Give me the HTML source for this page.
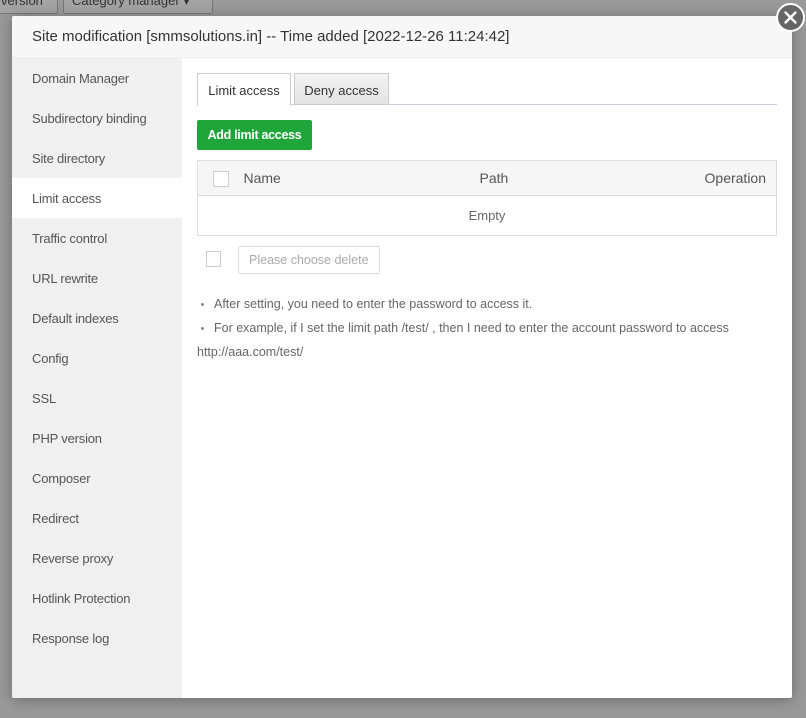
<!DOCTYPE html>
<html><head><style>
*{margin:0;padding:0;box-sizing:border-box}
body{width:806px;height:718px;background:#999;position:relative;overflow:hidden;font-family:"Liberation Sans",sans-serif;font-size:13px;color:#333;white-space:nowrap}
.bgbtn{position:absolute;top:-10px;height:24px;border:1px solid #777;border-radius:3px;background:#a3a3a3;color:#333;font-size:13px;padding:0 8px;line-height:20px}
.modal{position:absolute;left:12px;top:16px;width:780px;height:682px;background:#fff;box-shadow:0 2px 14px rgba(0,0,0,.3);border-radius:2px;overflow:hidden}
.hd{height:42px;background:#f7f7f7;border-bottom:1px solid #eee;padding-left:20px;line-height:42px;font-size:15px;color:#333}
.side{position:absolute;left:0;top:42px;width:170px;bottom:0;background:#f0f0f0}
.side div{height:40px;line-height:42px;padding-left:20px;color:#555;letter-spacing:-0.2px}
.side .on{background:#fff}
.main{position:absolute;left:185px;top:42px;right:15px}
.tabs{margin-top:15px;height:32px;border-bottom:1px solid #d0cde0;position:relative}
.tab{position:absolute;top:0;height:32px;line-height:33px;text-align:center;border:1px solid #ccc;}
.t1{left:0;width:94px;background:#fff;border-bottom:1px solid #fff;height:33px}
.t2{left:97px;width:95px;background:linear-gradient(#f3f3f3,#e3e3e3)}
.add{margin-top:15px;width:115px;height:30px;background:#20a53a;color:#fff;border-radius:2px;line-height:30px;text-align:center;font-weight:bold;font-size:12.5px;letter-spacing:-0.3px}
table{margin-top:10px;width:580px;border:1px solid #ddd;border-collapse:collapse}
th{background:#f6f6f6;height:35px;font-weight:normal;color:#555;font-size:14px;border-bottom:1px solid #ddd}
td{height:40px;text-align:center;color:#666}
.cb{display:inline-block;width:14px;height:16px;border:1px solid #ccc;background:#fff;vertical-align:middle}
.foot{position:relative;height:40px;margin-top:10px}
.del{position:absolute;left:41px;top:0;width:142px;height:28px;border:1px solid #ddd;border-radius:2px;color:#aaa;line-height:27px;padding-left:10px;font-size:12.5px}
ul{list-style:none;color:#666;font-size:12.5px}
ul li{line-height:24px;padding-left:17px;position:relative}
ul li:before{content:"";position:absolute;left:4px;top:11px;width:3px;height:3px;background:#888;border-radius:50%}
.x{position:absolute;left:776px;top:3px;width:29px;height:29px;border-radius:50%;background:#666;border:2px solid #fff}
</style></head><body>
<div class="bgbtn" style="left:-8px;width:66px">version</div>
<div class="bgbtn" style="left:63px;width:150px">Category manager ▾</div>
<div class="modal">
<div class="hd">Site modification [smmsolutions.in] -- Time added [2022-12-26 11:24:42]</div>
<div class="side">
<div>Domain Manager</div><div>Subdirectory binding</div><div>Site directory</div><div class="on">Limit access</div><div>Traffic control</div><div>URL rewrite</div><div>Default indexes</div><div>Config</div><div>SSL</div><div>PHP version</div><div>Composer</div><div>Redirect</div><div>Reverse proxy</div><div>Hotlink Protection</div><div>Response log</div>
</div>
<div class="main">
<div class="tabs"><div class="tab t1">Limit access</div><div class="tab t2">Deny access</div></div>
<div class="add">Add limit access</div>
<table><tr><th style="width:46px;text-align:center"><span class="cb" style="width:16px"></span></th><th style="text-align:left;width:120px">Name</th><th style="text-align:left;padding-left:116px">Path</th><th style="text-align:right;padding-right:10px">Operation</th></tr>
<tr><td colspan="4">Empty</td></tr></table>
<div class="foot"><span class="cb" style="position:absolute;left:9px;top:5px;width:15px"></span><div class="del">Please choose delete</div></div>
<ul style="margin-top:6px"><li>After setting, you need to enter the password to access it.</li><li>For example, if I set the limit path /test/ , then I need to enter the account password to access</li></ul>
<div style="color:#666;font-size:12.5px;line-height:24px;margin-top:0px">http://aaa.com/test/</div>
</div>
</div>
<div class="x"><svg width="25" height="25" viewBox="0 0 25 25"><path d="M7.5 7.5L17.5 17.5M17.5 7.5L7.5 17.5" stroke="#fff" stroke-width="2.4" stroke-linecap="round"/></svg></div>
</body></html>
